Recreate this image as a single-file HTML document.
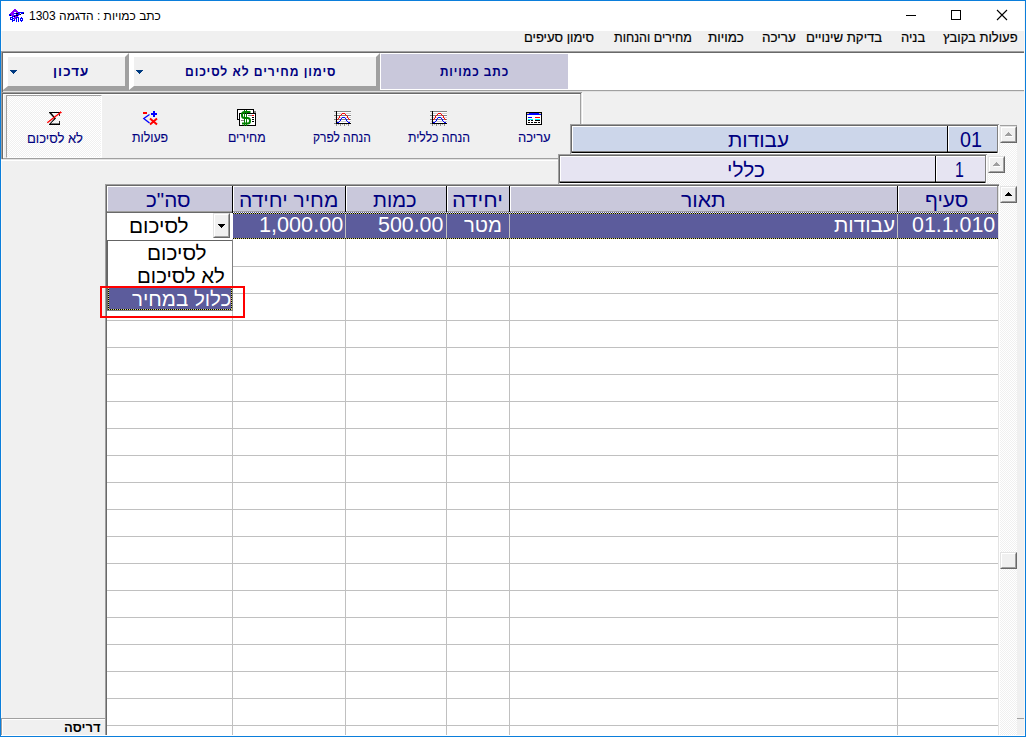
<!DOCTYPE html>
<html lang="he"><head><meta charset="utf-8"><title>כתב כמויות</title>
<style>
html,body{margin:0;padding:0}
body{width:1026px;height:737px;position:relative;overflow:hidden;background:#f0f0f0;font-family:"Liberation Sans",sans-serif;direction:ltr}
body div,body span.t,body svg{position:absolute;box-sizing:border-box}
.t{white-space:nowrap;direction:rtl;unicode-bidi:plaintext;transform-origin:0 0;line-height:1}
.dith{background-image:repeating-conic-gradient(#ffffff 0 25%,#f0f0f0 0 50%);background-size:2px 2px}
</style></head>
<body>
<div style="left:0px;top:0px;width:1026px;height:1px;background:#0b7edb;"></div>
<div style="left:0px;top:736px;width:1026px;height:1px;background:#0b7edb;"></div>
<div style="left:0px;top:0px;width:1px;height:737px;background:#0b7edb;"></div>
<div style="left:1025px;top:0px;width:1px;height:737px;background:#0b7edb;"></div>
<div style="left:1px;top:1px;width:1024px;height:30px;background:#ffffff;"></div>
<svg style="left:9px;top:9px" width="16" height="13" viewBox="9 9 16 13" shape-rendering="crispEdges"><rect x="14" y="9" width="2" height="1" fill="#8a00ff"/><rect x="13" y="10" width="4" height="1" fill="#8a00ff"/><rect x="12" y="11" width="6" height="1" fill="#8a00ff"/><rect x="11" y="12" width="3" height="1" fill="#8a00ff"/><rect x="14" y="12" width="2" height="1" fill="#ffffff"/><rect x="16" y="12" width="2" height="1" fill="#8a00ff"/><rect x="18" y="12" width="6" height="1" fill="#0000ff"/><rect x="10" y="13" width="4" height="1" fill="#8a00ff"/><rect x="14" y="13" width="2" height="1" fill="#0000ff"/><rect x="16" y="13" width="2" height="1" fill="#000000"/><rect x="18" y="13" width="1" height="1" fill="#0000ff"/><rect x="19" y="13" width="1" height="1" fill="#8a00ff"/><rect x="20" y="13" width="1" height="1" fill="#ffffff"/><rect x="21" y="13" width="2" height="1" fill="#0000ff"/><rect x="23" y="13" width="1" height="1" fill="#000000"/><rect x="9" y="14" width="2" height="1" fill="#0000ff"/><rect x="11" y="14" width="3" height="1" fill="#8a00ff"/><rect x="14" y="14" width="2" height="1" fill="#ffffff"/><rect x="16" y="14" width="4" height="1" fill="#0000ff"/><rect x="20" y="14" width="1" height="1" fill="#000000"/><rect x="9" y="15" width="1" height="1" fill="#0000ff"/><rect x="10" y="15" width="1" height="1" fill="#000000"/><rect x="11" y="15" width="3" height="1" fill="#8a00ff"/><rect x="14" y="15" width="2" height="1" fill="#0000ff"/><rect x="16" y="15" width="2" height="1" fill="#000000"/><rect x="18" y="15" width="1" height="1" fill="#8a00ff"/><rect x="12" y="16" width="2" height="1" fill="#0000ff"/><rect x="14" y="16" width="1" height="1" fill="#000000"/><rect x="15" y="16" width="3" height="1" fill="#8a00ff"/><rect x="10" y="17" width="3" height="1" fill="#0000ff"/><rect x="14" y="17" width="2" height="1" fill="#8a00ff"/><rect x="16" y="17" width="3" height="1" fill="#0000ff"/><rect x="21" y="17" width="1" height="1" fill="#0000ff"/><rect x="10" y="18" width="1" height="1" fill="#0000ff"/><rect x="11" y="18" width="1" height="1" fill="#ffffff"/><rect x="12" y="18" width="2" height="1" fill="#0000ff"/><rect x="14" y="18" width="2" height="1" fill="#8a00ff"/><rect x="16" y="18" width="1" height="1" fill="#0000ff"/><rect x="18" y="18" width="1" height="1" fill="#0000ff"/><rect x="20" y="18" width="3" height="1" fill="#0000ff"/><rect x="10" y="19" width="3" height="1" fill="#0000ff"/><rect x="13" y="19" width="1" height="1" fill="#ffffff"/><rect x="14" y="19" width="1" height="1" fill="#0000ff"/><rect x="16" y="19" width="1" height="1" fill="#0000ff"/><rect x="18" y="19" width="1" height="1" fill="#0000ff"/><rect x="20" y="19" width="1" height="1" fill="#0000ff"/><rect x="21" y="19" width="1" height="1" fill="#ffffff"/><rect x="22" y="19" width="1" height="1" fill="#0000ff"/><rect x="12" y="20" width="3" height="1" fill="#0000ff"/><rect x="16" y="20" width="1" height="1" fill="#0000ff"/><rect x="18" y="20" width="1" height="1" fill="#0000ff"/><rect x="20" y="20" width="3" height="1" fill="#0000ff"/><rect x="12" y="21" width="1" height="1" fill="#0000ff"/><rect x="16" y="21" width="1" height="1" fill="#0000ff"/><rect x="18" y="21" width="1" height="1" fill="#0000ff"/><rect x="21" y="21" width="1" height="1" fill="#0000ff"/></svg>
<span class="t" style="left:29.00px;top:10px;color:#000;font-size:12px;">כתב כמויות : הדגמה 1303</span>
<svg style="left:900px;top:5px" width="115" height="22" viewBox="0 0 115 22">
<path d="M6 10.5H16" stroke="#000" stroke-width="1" fill="none"/>
<rect x="51.5" y="5.5" width="9" height="9" stroke="#000" stroke-width="1" fill="none"/>
<path d="M97 5L107 15M107 5L97 15" stroke="#000" stroke-width="1.1" fill="none"/>
</svg>
<span class="t" style="left:943.00px;top:31px;color:#000;font-size:13px;-webkit-text-stroke:0.2px #000;">פעולות בקובץ</span>
<span class="t" style="left:901.00px;top:31px;color:#000;font-size:13px;-webkit-text-stroke:0.2px #000;">בניה</span>
<span class="t" style="left:805.99px;top:31px;color:#000;font-size:13px;-webkit-text-stroke:0.2px #000;transform:scaleX(1.0135);">בדיקת שינויים</span>
<span class="t" style="left:761.97px;top:31px;color:#000;font-size:13px;-webkit-text-stroke:0.2px #000;transform:scaleX(1.0323);">עריכה</span>
<span class="t" style="left:708.00px;top:31px;color:#000;font-size:13px;-webkit-text-stroke:0.2px #000;transform:scaleX(1.0294);">כמויות</span>
<span class="t" style="left:614.00px;top:31px;color:#000;font-size:13px;-webkit-text-stroke:0.2px #000;transform:scaleX(0.9625);">מחירים והנחות</span>
<span class="t" style="left:524.00px;top:31px;color:#000;font-size:13px;-webkit-text-stroke:0.2px #000;">סימון סעיפים</span>
<div style="left:1px;top:51px;width:1024px;height:1px;background:#a0a0a0;"></div>
<div style="left:2px;top:52px;width:1023px;height:1px;background:#696969;"></div>
<div style="left:1px;top:51px;width:1px;height:108px;background:#a0a0a0;"></div>
<div style="left:2px;top:52px;width:1px;height:107px;background:#696969;"></div>
<div style="left:3px;top:53px;width:1022px;height:37px;background:#ffffff;"></div>
<div style="left:3px;top:90px;width:1022px;height:1px;background:#a0a0a0;"></div>
<div style="left:3px;top:91px;width:1022px;height:1px;background:#e3e3e3;"></div>
<div style="left:3px;top:53px;width:126px;height:37px;background:#f0f0f0;border-style:solid;border-width:4px 4px 4px 5px;border-color:#ffffff #a0a0a0 #a0a0a0 #ffffff"></div>
<div style="left:129px;top:53px;width:251px;height:37px;background:#f0f0f0;border-style:solid;border-width:4px 4px 4px 5px;border-color:#ffffff #a0a0a0 #a0a0a0 #ffffff"></div>
<div style="left:381px;top:54px;width:187px;height:35px;background:#c9c8db;"></div>
<svg style="left:10px;top:70px" width="7" height="4" viewBox="0 0 7 4" shape-rendering="crispEdges"><path d="M0 0h7v1h-7zM1 1h5v1h-5zM2 2h3v1h-3zM3 3h1v1h-1z" fill="#003a80"/></svg>
<svg style="left:136px;top:70px" width="7" height="4" viewBox="0 0 7 4" shape-rendering="crispEdges"><path d="M0 0h7v1h-7zM1 1h5v1h-5zM2 2h3v1h-3zM3 3h1v1h-1z" fill="#003a80"/></svg>
<span class="t" style="left:52.97px;top:65px;color:#000080;font-size:13px;font-weight:bold;letter-spacing:1px;transform:scaleX(1.0303);">עדכון</span>
<span class="t" style="left:185.07px;top:65px;color:#000080;font-size:13px;font-weight:bold;letter-spacing:1px;transform:scaleX(0.9313);">סימון מחירים לא לסיכום</span>
<span class="t" style="left:440.00px;top:65px;color:#000080;font-size:13px;font-weight:bold;letter-spacing:1px;transform:scaleX(0.9067);">כתב כמויות</span>
<div style="left:1px;top:92px;width:581px;height:1px;background:#a0a0a0;"></div>
<div style="left:2px;top:93px;width:579px;height:1px;background:#696969;"></div>
<div style="left:1px;top:160px;width:582px;height:1px;background:#ffffff;"></div>
<div style="left:2px;top:159px;width:580px;height:1px;background:#e3e3e3;"></div>
<div style="left:582px;top:93px;width:1px;height:68px;background:#ffffff;"></div>
<div style="left:581px;top:93px;width:1px;height:67px;background:#e3e3e3;"></div>
<div style="left:3px;top:94px;width:578px;height:1px;background:#ffffff;"></div>
<div style="left:3px;top:94px;width:1px;height:64px;background:#ffffff;"></div>
<div style="left:3px;top:158px;width:578px;height:1px;background:#a0a0a0;"></div>
<div style="left:580px;top:94px;width:1px;height:65px;background:#a0a0a0;"></div>
<div class="dith" style="left:6px;top:95px;width:96px;height:63px;border-style:solid;border-width:1px;border-color:#a0a0a0 #ffffff #ffffff #a0a0a0"></div>
<span class="t" style="left:27.00px;top:132px;color:#000080;font-size:13px;-webkit-text-stroke:0.12px #000080;">לא לסיכום</span>
<span class="t" style="left:132.00px;top:131px;color:#000080;font-size:13px;-webkit-text-stroke:0.12px #000080;transform:scaleX(0.9474);">פעולות</span>
<span class="t" style="left:228.05px;top:131px;color:#000080;font-size:13px;-webkit-text-stroke:0.12px #000080;transform:scaleX(0.9474);">מחירים</span>
<span class="t" style="left:313.08px;top:131px;color:#000080;font-size:13px;-webkit-text-stroke:0.12px #000080;transform:scaleX(0.9180);">הנחה לפרק</span>
<span class="t" style="left:408.00px;top:131px;color:#000080;font-size:13px;-webkit-text-stroke:0.12px #000080;transform:scaleX(0.9385);">הנחה כללית</span>
<span class="t" style="left:518.00px;top:131px;color:#000080;font-size:13px;-webkit-text-stroke:0.12px #000080;">עריכה</span>
<svg style="left:45px;top:108px" width="20" height="19" viewBox="45 108 20 19"><path d="M49 112H60V116H59.2V113H51.4L56 118.4L50.8 123.6H59.2V121H60V125H49V124.2L54.3 118.5L49 112.8Z" fill="#000"/><path d="M47.3 122.8L60.8 112.3" stroke="#ff0000" stroke-width="1.35" fill="none"/><path d="M60.2 111L62.2 112.9L59.6 113.2Z" fill="#ff0000"/></svg><svg style="left:143px;top:111px" width="15" height="15" viewBox="143 111 15 15" shape-rendering="crispEdges"><rect x="143" y="112" width="4" height="2" fill="#ff0000"/><rect x="151" y="113" width="6" height="2" fill="#0000ff"/><rect x="153" y="111" width="2" height="6" fill="#0000ff"/></svg><svg style="left:141px;top:110px" width="19" height="17" viewBox="141 110 19 17"><path d="M149.5 114.5L143.8 118.5L149.5 123" stroke="#0000ff" stroke-width="1.3" fill="none"/><path d="M150 118.5L157 124.5M157 118.5L150 124.5" stroke="#ff0000" stroke-width="2" fill="none"/></svg><svg style="left:237px;top:109px" width="19" height="17" viewBox="237 109 19 17" shape-rendering="crispEdges"><rect x="237" y="109" width="17" height="11" fill="#000"/><rect x="238" y="110" width="15" height="9" fill="#fff"/><rect x="239" y="113" width="17" height="13" fill="#000"/><rect x="240" y="114" width="15" height="11" fill="#fff"/><rect x="254" y="111" width="2" height="2" fill="#808080"/><rect x="248" y="115" width="4" height="1" fill="#808080"/><rect x="252" y="115" width="2" height="1" fill="#ff0000"/><rect x="252" y="117" width="2" height="1" fill="#000"/><rect x="252" y="119" width="2" height="1" fill="#000"/><rect x="252" y="121" width="2" height="1" fill="#000"/><rect x="241" y="120" width="3" height="1" fill="#808080"/></svg><svg style="left:240px;top:109px" width="12" height="18" viewBox="240 109 12 18"><path d="M250.5 112H244.5C243 112 242 113 242 114.5V115.5C242 117 243 118 244.5 118H247.5C249 118 250 119 250 120.5V121C250 122.5 249 123.5 247.5 123.5H242" stroke="#008000" stroke-width="2" fill="none"/><path d="M244.5 110V126M246.5 110V126" stroke="#008000" stroke-width="1" fill="none"/></svg><svg style="left:334px;top:111px" width="17" height="15" viewBox="334 111 17 15" shape-rendering="crispEdges"><rect x="337" y="112" width="14" height="11" fill="#ffffff"/><rect x="334" y="111" width="17" height="1" fill="#808080"/><rect x="334" y="115" width="17" height="1" fill="#808080"/><rect x="334" y="119" width="17" height="1" fill="#808080"/><rect x="335" y="113" width="16" height="1" fill="#d0d0d0"/><rect x="335" y="117" width="16" height="1" fill="#d0d0d0"/><rect x="335" y="121" width="16" height="1" fill="#d0d0d0"/><rect x="334" y="123" width="2" height="1" fill="#808080"/><rect x="336" y="111" width="1" height="13" fill="#000000"/><rect x="336" y="123" width="15" height="1" fill="#000000"/><rect x="336" y="124" width="1" height="2" fill="#909090"/><rect x="340" y="124" width="1" height="2" fill="#909090"/><rect x="344" y="124" width="1" height="2" fill="#909090"/><rect x="348" y="124" width="1" height="2" fill="#909090"/><rect x="338" y="124" width="1" height="1" fill="#b0b0b0"/><rect x="342" y="124" width="1" height="1" fill="#b0b0b0"/><rect x="346" y="124" width="1" height="1" fill="#b0b0b0"/><rect x="337" y="119" width="1" height="1" fill="#ff0000"/><rect x="338" y="118" width="1" height="1" fill="#ff0000"/><rect x="339" y="116" width="1" height="2" fill="#ff0000"/><rect x="340" y="115" width="1" height="1" fill="#ff0000"/><rect x="341" y="114" width="1" height="1" fill="#ff0000"/><rect x="342" y="113" width="3" height="1" fill="#ff0000"/><rect x="345" y="114" width="1" height="1" fill="#ff0000"/><rect x="346" y="115" width="1" height="1" fill="#ff0000"/><rect x="347" y="116" width="1" height="2" fill="#ff0000"/><rect x="348" y="118" width="1" height="1" fill="#ff0000"/><rect x="349" y="119" width="1" height="1" fill="#ff0000"/><rect x="337" y="122" width="2" height="1" fill="#0000ff"/><rect x="339" y="121" width="1" height="1" fill="#0000ff"/><rect x="340" y="119" width="1" height="2" fill="#0000ff"/><rect x="341" y="118" width="1" height="1" fill="#0000ff"/><rect x="342" y="117" width="3" height="1" fill="#0000ff"/><rect x="345" y="118" width="1" height="1" fill="#0000ff"/><rect x="346" y="119" width="1" height="2" fill="#0000ff"/><rect x="347" y="121" width="1" height="1" fill="#0000ff"/><rect x="348" y="122" width="2" height="1" fill="#0000ff"/></svg><svg style="left:430px;top:111px" width="17" height="15" viewBox="430 111 17 15" shape-rendering="crispEdges"><rect x="433" y="112" width="14" height="11" fill="#ffffff"/><rect x="430" y="111" width="17" height="1" fill="#808080"/><rect x="430" y="115" width="17" height="1" fill="#808080"/><rect x="430" y="119" width="17" height="1" fill="#808080"/><rect x="431" y="113" width="16" height="1" fill="#d0d0d0"/><rect x="431" y="117" width="16" height="1" fill="#d0d0d0"/><rect x="431" y="121" width="16" height="1" fill="#d0d0d0"/><rect x="430" y="123" width="2" height="1" fill="#808080"/><rect x="432" y="111" width="1" height="13" fill="#000000"/><rect x="432" y="123" width="15" height="1" fill="#000000"/><rect x="432" y="124" width="1" height="2" fill="#909090"/><rect x="436" y="124" width="1" height="2" fill="#909090"/><rect x="440" y="124" width="1" height="2" fill="#909090"/><rect x="444" y="124" width="1" height="2" fill="#909090"/><rect x="434" y="124" width="1" height="1" fill="#b0b0b0"/><rect x="438" y="124" width="1" height="1" fill="#b0b0b0"/><rect x="442" y="124" width="1" height="1" fill="#b0b0b0"/><rect x="433" y="119" width="1" height="1" fill="#ff0000"/><rect x="434" y="118" width="1" height="1" fill="#ff0000"/><rect x="435" y="116" width="1" height="2" fill="#ff0000"/><rect x="436" y="115" width="1" height="1" fill="#ff0000"/><rect x="437" y="114" width="1" height="1" fill="#ff0000"/><rect x="438" y="113" width="3" height="1" fill="#ff0000"/><rect x="441" y="114" width="1" height="1" fill="#ff0000"/><rect x="442" y="115" width="1" height="1" fill="#ff0000"/><rect x="443" y="116" width="1" height="2" fill="#ff0000"/><rect x="444" y="118" width="1" height="1" fill="#ff0000"/><rect x="445" y="119" width="1" height="1" fill="#ff0000"/><rect x="433" y="122" width="2" height="1" fill="#0000ff"/><rect x="435" y="121" width="1" height="1" fill="#0000ff"/><rect x="436" y="119" width="1" height="2" fill="#0000ff"/><rect x="437" y="118" width="1" height="1" fill="#0000ff"/><rect x="438" y="117" width="3" height="1" fill="#0000ff"/><rect x="441" y="118" width="1" height="1" fill="#0000ff"/><rect x="442" y="119" width="1" height="2" fill="#0000ff"/><rect x="443" y="121" width="1" height="1" fill="#0000ff"/><rect x="444" y="122" width="2" height="1" fill="#0000ff"/></svg><svg style="left:526px;top:112px" width="16" height="13" viewBox="526 112 16 13" shape-rendering="crispEdges"><rect x="526" y="112" width="16" height="13" fill="#000"/><rect x="527" y="113" width="14" height="11" fill="#fff"/><rect x="527" y="113" width="14" height="2" fill="#0000ff"/><rect x="527" y="113" width="2" height="1" fill="#c8c090"/><rect x="539" y="113" width="2" height="1" fill="#c8c090"/><rect x="528" y="117" width="4" height="1" fill="#0000ff"/><rect x="535" y="117" width="5" height="1" fill="#ff0000"/><rect x="528" y="119" width="5" height="1" fill="#00ffff"/><rect x="535" y="119" width="5" height="1" fill="#00ffff"/><rect x="528" y="120" width="2" height="1" fill="#000"/><rect x="531" y="120" width="2" height="1" fill="#000"/><rect x="535" y="120" width="5" height="1" fill="#000"/><rect x="528" y="122" width="2" height="1" fill="#000"/><rect x="531" y="122" width="2" height="1" fill="#000"/><rect x="534" y="122" width="3" height="1" fill="#000"/><rect x="538" y="122" width="2" height="1" fill="#000"/></svg>
<div style="left:570px;top:124px;width:429px;height:1px;background:#a0a0a0;"></div>
<div style="left:571px;top:125px;width:427px;height:1px;background:#696969;"></div>
<div style="left:570px;top:124px;width:1px;height:30px;background:#a0a0a0;"></div>
<div style="left:571px;top:125px;width:1px;height:28px;background:#696969;"></div>
<div style="left:572px;top:126px;width:426px;height:26px;background:#ccd6ea;"></div>
<div style="left:572px;top:126px;width:425px;height:1px;background:#ffffff;"></div>
<div style="left:572px;top:126px;width:1px;height:25px;background:#ffffff;"></div>
<div style="left:572px;top:151px;width:426px;height:1px;background:#808080;"></div>
<div style="left:572px;top:152px;width:426px;height:1px;background:#000000;"></div>
<div style="left:572px;top:153px;width:427px;height:1px;background:#ffffff;"></div>
<div style="left:947px;top:126px;width:1px;height:27px;background:#000000;"></div>
<div style="left:948px;top:126px;width:1px;height:25px;background:#ffffff;"></div>
<div style="left:997px;top:126px;width:1px;height:27px;background:#808080;"></div>
<div style="left:998px;top:125px;width:1px;height:29px;background:#ffffff;"></div>
<div style="left:558px;top:154px;width:429px;height:1px;background:#a0a0a0;"></div>
<div style="left:559px;top:155px;width:427px;height:1px;background:#696969;"></div>
<div style="left:558px;top:154px;width:1px;height:30px;background:#a0a0a0;"></div>
<div style="left:559px;top:155px;width:1px;height:28px;background:#696969;"></div>
<div style="left:560px;top:156px;width:426px;height:26px;background:#e6e4f2;"></div>
<div style="left:560px;top:156px;width:425px;height:1px;background:#ffffff;"></div>
<div style="left:560px;top:156px;width:1px;height:25px;background:#ffffff;"></div>
<div style="left:560px;top:181px;width:426px;height:1px;background:#808080;"></div>
<div style="left:560px;top:182px;width:426px;height:1px;background:#000000;"></div>
<div style="left:560px;top:183px;width:427px;height:1px;background:#ffffff;"></div>
<div style="left:935px;top:156px;width:1px;height:27px;background:#000000;"></div>
<div style="left:936px;top:156px;width:1px;height:25px;background:#ffffff;"></div>
<div style="left:985px;top:156px;width:1px;height:27px;background:#808080;"></div>
<div style="left:986px;top:155px;width:1px;height:29px;background:#ffffff;"></div>
<span class="t" style="left:728.00px;top:131px;color:#000080;font-size:19.7px;transform:scaleX(1.0526);">עבודות</span>
<span class="t" style="left:960.13px;top:128px;color:#000080;font-size:22.7px;direction:ltr;transform:scaleX(0.8696);">01</span>
<span class="t" style="left:726.88px;top:161px;color:#000080;font-size:19.7px;transform:scaleX(1.0606);">כללי</span>
<span class="t" style="left:954.60px;top:158px;color:#000080;font-size:22.7px;direction:ltr;transform:scaleX(0.7000);">1</span>
<div class="dith" style="left:1000px;top:143px;width:17px;height:43px"></div>
<div style="left:1000px;top:125px;width:17px;height:1px;background:#a0a0a0;"></div>
<div style="left:1000px;top:126px;width:17px;height:17px;background:#f0f0f0;border:1px solid;border-color:#e3e3e3 #696969 #696969 #e3e3e3"><div style="left:0;top:0;width:15px;height:15px;border:1px solid;border-color:#ffffff #a0a0a0 #a0a0a0 #ffffff"></div></div>
<svg style="left:1006px;top:133px" width="7" height="4" viewBox="0 0 7 4" shape-rendering="crispEdges"><path d="M3 0h1v1h-1zM2 1h3v1h-3zM1 2h5v1h-5zM0 3h7v1h-7z" fill="#ffffff"/></svg>
<svg style="left:1005px;top:132px" width="7" height="4" viewBox="0 0 7 4" shape-rendering="crispEdges"><path d="M3 0h1v1h-1zM2 1h3v1h-3zM1 2h5v1h-5zM0 3h7v1h-7z" fill="#a0a0a0"/></svg>
<div class="dith" style="left:988px;top:173px;width:17px;height:11px"></div>
<div style="left:988px;top:156px;width:17px;height:17px;background:#f0f0f0;border:1px solid;border-color:#e3e3e3 #696969 #696969 #e3e3e3"><div style="left:0;top:0;width:15px;height:15px;border:1px solid;border-color:#ffffff #a0a0a0 #a0a0a0 #ffffff"></div></div>
<svg style="left:994px;top:163px" width="7" height="4" viewBox="0 0 7 4" shape-rendering="crispEdges"><path d="M3 0h1v1h-1zM2 1h3v1h-3zM1 2h5v1h-5zM0 3h7v1h-7z" fill="#ffffff"/></svg>
<svg style="left:993px;top:162px" width="7" height="4" viewBox="0 0 7 4" shape-rendering="crispEdges"><path d="M3 0h1v1h-1zM2 1h3v1h-3zM1 2h5v1h-5zM0 3h7v1h-7z" fill="#a0a0a0"/></svg>
<div style="left:107px;top:186px;width:891px;height:550px;background:#ffffff;"></div>
<div style="left:105px;top:184px;width:894px;height:1px;background:#a0a0a0;"></div>
<div style="left:106px;top:185px;width:893px;height:1px;background:#696969;"></div>
<div style="left:105px;top:184px;width:1px;height:552px;background:#a0a0a0;"></div>
<div style="left:106px;top:185px;width:1px;height:551px;background:#696969;"></div>
<div style="left:998px;top:186px;width:1px;height:550px;background:#e3e3e3;"></div>
<div style="left:999px;top:185px;width:1px;height:551px;background:#ffffff;"></div>
<div style="left:107px;top:186px;width:126px;height:25px;background:#c9c8db;"></div>
<div style="left:107px;top:186px;width:125px;height:1px;background:#ffffff;"></div>
<div style="left:107px;top:186px;width:1px;height:25px;background:#ffffff;"></div>
<div style="left:232px;top:186px;width:1px;height:27px;background:#000000;"></div>
<div style="left:233px;top:186px;width:113px;height:25px;background:#c9c8db;"></div>
<div style="left:233px;top:186px;width:112px;height:1px;background:#ffffff;"></div>
<div style="left:233px;top:186px;width:1px;height:25px;background:#ffffff;"></div>
<div style="left:345px;top:186px;width:1px;height:27px;background:#000000;"></div>
<div style="left:346px;top:186px;width:101px;height:25px;background:#c9c8db;"></div>
<div style="left:346px;top:186px;width:100px;height:1px;background:#ffffff;"></div>
<div style="left:346px;top:186px;width:1px;height:25px;background:#ffffff;"></div>
<div style="left:446px;top:186px;width:1px;height:27px;background:#000000;"></div>
<div style="left:447px;top:186px;width:63px;height:25px;background:#c9c8db;"></div>
<div style="left:447px;top:186px;width:62px;height:1px;background:#ffffff;"></div>
<div style="left:447px;top:186px;width:1px;height:25px;background:#ffffff;"></div>
<div style="left:509px;top:186px;width:1px;height:27px;background:#000000;"></div>
<div style="left:510px;top:186px;width:388px;height:25px;background:#c9c8db;"></div>
<div style="left:510px;top:186px;width:387px;height:1px;background:#ffffff;"></div>
<div style="left:510px;top:186px;width:1px;height:25px;background:#ffffff;"></div>
<div style="left:897px;top:186px;width:1px;height:27px;background:#000000;"></div>
<div style="left:898px;top:186px;width:100px;height:25px;background:#c9c8db;"></div>
<div style="left:898px;top:186px;width:99px;height:1px;background:#ffffff;"></div>
<div style="left:898px;top:186px;width:1px;height:25px;background:#ffffff;"></div>
<div style="left:997px;top:186px;width:1px;height:27px;background:#909090;"></div>
<div style="left:107px;top:211px;width:891px;height:1px;background:#a0a0a0;"></div>
<div style="left:107px;top:212px;width:891px;height:1px;background:#696969;"></div>
<div style="left:232px;top:211px;width:1px;height:2px;background:#000000;"></div>
<div style="left:345px;top:211px;width:1px;height:2px;background:#000000;"></div>
<div style="left:446px;top:211px;width:1px;height:2px;background:#000000;"></div>
<div style="left:509px;top:211px;width:1px;height:2px;background:#000000;"></div>
<div style="left:897px;top:211px;width:1px;height:2px;background:#000000;"></div>
<div style="left:232px;top:213px;width:1px;height:523px;background:#c0c0c0;"></div>
<div style="left:345px;top:213px;width:1px;height:523px;background:#c0c0c0;"></div>
<div style="left:446px;top:213px;width:1px;height:523px;background:#c0c0c0;"></div>
<div style="left:509px;top:213px;width:1px;height:523px;background:#c0c0c0;"></div>
<div style="left:897px;top:213px;width:1px;height:523px;background:#c0c0c0;"></div>
<div style="left:107px;top:266px;width:891px;height:1px;background:#c0c0c0;"></div>
<div style="left:107px;top:293px;width:891px;height:1px;background:#c0c0c0;"></div>
<div style="left:107px;top:320px;width:891px;height:1px;background:#c0c0c0;"></div>
<div style="left:107px;top:347px;width:891px;height:1px;background:#c0c0c0;"></div>
<div style="left:107px;top:374px;width:891px;height:1px;background:#c0c0c0;"></div>
<div style="left:107px;top:401px;width:891px;height:1px;background:#c0c0c0;"></div>
<div style="left:107px;top:428px;width:891px;height:1px;background:#c0c0c0;"></div>
<div style="left:107px;top:455px;width:891px;height:1px;background:#c0c0c0;"></div>
<div style="left:107px;top:482px;width:891px;height:1px;background:#c0c0c0;"></div>
<div style="left:107px;top:509px;width:891px;height:1px;background:#c0c0c0;"></div>
<div style="left:107px;top:536px;width:891px;height:1px;background:#c0c0c0;"></div>
<div style="left:107px;top:563px;width:891px;height:1px;background:#c0c0c0;"></div>
<div style="left:107px;top:590px;width:891px;height:1px;background:#c0c0c0;"></div>
<div style="left:107px;top:617px;width:891px;height:1px;background:#c0c0c0;"></div>
<div style="left:107px;top:644px;width:891px;height:1px;background:#c0c0c0;"></div>
<div style="left:107px;top:671px;width:891px;height:1px;background:#c0c0c0;"></div>
<div style="left:107px;top:698px;width:891px;height:1px;background:#c0c0c0;"></div>
<div style="left:107px;top:725px;width:891px;height:1px;background:#c0c0c0;"></div>
<div style="left:233px;top:214px;width:765px;height:24px;background:#5c5c9c;"></div>
<div style="left:345px;top:214px;width:1px;height:24px;background:#c0c0c0;"></div>
<div style="left:446px;top:214px;width:1px;height:24px;background:#c0c0c0;"></div>
<div style="left:509px;top:214px;width:1px;height:24px;background:#c0c0c0;"></div>
<div style="left:897px;top:214px;width:1px;height:24px;background:#c0c0c0;"></div>
<div style="left:233px;top:212px;width:765px;height:1px;background:repeating-linear-gradient(90deg,#ffffff 0 1px,#5050a0 1px 2px)"></div>
<div style="left:233px;top:213px;width:765px;height:1px;background:repeating-linear-gradient(90deg,#000000 0 1px,#d8d870 1px 2px)"></div>
<div style="left:233px;top:238px;width:765px;height:1px;background:repeating-linear-gradient(90deg,#000000 0 1px,#d8d870 1px 2px)"></div>
<div style="left:107px;top:213px;width:126px;height:26px;background:#ffffff;"></div>
<div style="left:213px;top:213px;width:17px;height:25px;background:#f0f0f0;border:1px solid;border-color:#e3e3e3 #696969 #696969 #e3e3e3"><div style="left:0;top:0;width:15px;height:23px;border:1px solid;border-color:#ffffff #a0a0a0 #a0a0a0 #ffffff"></div></div>
<svg style="left:218px;top:224px" width="7" height="4" viewBox="0 0 7 4" shape-rendering="crispEdges"><path d="M0 0h7v1h-7zM1 1h5v1h-5zM2 2h3v1h-3zM3 3h1v1h-1z" fill="#000000"/></svg>
<span class="t" style="left:145.95px;top:191px;color:#000080;font-size:19.7px;transform:scaleX(1.0488);">סה"כ</span>
<span class="t" style="left:238.93px;top:191px;color:#000080;font-size:19.7px;transform:scaleX(1.0659);">מחיר יחידה</span>
<span class="t" style="left:373.00px;top:191px;color:#000080;font-size:19.7px;transform:scaleX(1.0238);">כמות</span>
<span class="t" style="left:451.88px;top:191px;color:#000080;font-size:19.7px;transform:scaleX(1.1163);">יחידה</span>
<span class="t" style="left:681.00px;top:191px;color:#000080;font-size:19.7px;transform:scaleX(1.0750);">תאור</span>
<span class="t" style="left:924.95px;top:191px;color:#000080;font-size:19.7px;transform:scaleX(1.0500);">סעיף</span>
<span class="t" style="left:128.89px;top:217px;color:#000;font-size:19.7px;transform:scaleX(1.0556);">לסיכום</span>
<span class="t" style="left:259.09px;top:213px;color:#fff;font-size:22.7px;direction:ltr;transform:scaleX(0.9535);">1,000.00</span>
<span class="t" style="left:378.06px;top:213px;color:#fff;font-size:22.7px;direction:ltr;transform:scaleX(0.9412);">500.00</span>
<span class="t" style="left:464.00px;top:216px;color:#fff;font-size:19.7px;transform:scaleX(1.0286);">מטר</span>
<span class="t" style="left:834.00px;top:216px;color:#fff;font-size:19.7px;transform:scaleX(1.0526);">עבודות</span>
<span class="t" style="left:912.06px;top:213px;color:#fff;font-size:22.7px;direction:ltr;transform:scaleX(0.9425);">01.1.010</span>
<div style="left:107px;top:240px;width:126px;height:71px;background:#ffffff;"></div>
<div style="left:107px;top:240px;width:126px;height:1px;background:#646464;"></div>
<div style="left:107px;top:240px;width:1px;height:71px;background:#646464;"></div>
<div style="left:232px;top:240px;width:1px;height:71px;background:#808080;"></div>
<div style="left:107px;top:310px;width:126px;height:1px;background:#808080;"></div>
<span class="t" style="left:146.89px;top:244px;color:#000;font-size:19.7px;transform:scaleX(1.0556);">לסיכום</span>
<span class="t" style="left:136.93px;top:267px;color:#000;font-size:19.7px;transform:scaleX(1.0366);">לא לסיכום</span>
<div style="left:108px;top:287px;width:124px;height:23px;background:#5c5c9c;"></div>
<div style="left:108px;top:287px;width:124px;height:23px;background:repeating-linear-gradient(90deg,#000 0 1px,#d8d870 1px 2px) 0 0/100% 1px no-repeat,repeating-linear-gradient(90deg,#000 0 1px,#d8d870 1px 2px) 0 100%/100% 1px no-repeat,repeating-linear-gradient(0deg,#000 0 1px,#d8d870 1px 2px) 0 0/1px 100% no-repeat,repeating-linear-gradient(0deg,#000 0 1px,#d8d870 1px 2px) 100% 0/1px 100% no-repeat"></div>
<span class="t" style="left:132.00px;top:290px;color:#fff;font-size:19.7px;transform:scaleX(1.0426);">כלול במחיר</span>
<div style="left:100px;top:286px;width:145px;height:32px;border:2px solid #ff0000"></div>
<div class="dith" style="left:1000px;top:186px;width:17px;height:550px"></div>
<div style="left:1000px;top:186px;width:17px;height:17px;background:#f0f0f0;border:1px solid;border-color:#e3e3e3 #696969 #696969 #e3e3e3"><div style="left:0;top:0;width:15px;height:15px;border:1px solid;border-color:#ffffff #a0a0a0 #a0a0a0 #ffffff"></div></div>
<svg style="left:1005px;top:192px" width="7" height="4" viewBox="0 0 7 4" shape-rendering="crispEdges"><path d="M3 0h1v1h-1zM2 1h3v1h-3zM1 2h5v1h-5zM0 3h7v1h-7z" fill="#000000"/></svg>
<div style="left:1000px;top:552px;width:17px;height:17px;background:#f0f0f0;border:1px solid;border-color:#e3e3e3 #696969 #696969 #e3e3e3"><div style="left:0;top:0;width:15px;height:15px;border:1px solid;border-color:#ffffff #a0a0a0 #a0a0a0 #ffffff"></div></div>
<div style="left:1017px;top:718px;width:7px;height:1px;background:#a0a0a0;"></div>
<div style="left:1024px;top:1px;width:1px;height:735px;background:#f8f8f8;"></div>
<div style="left:1px;top:31px;width:1px;height:20px;background:#fbf8f4;"></div>
<div style="left:1px;top:161px;width:1px;height:557px;background:#fbf8f4;"></div>
<div style="left:1px;top:718px;width:1px;height:17px;background:#a0a0a0;"></div>
<div style="left:1px;top:718px;width:104px;height:1px;background:#a0a0a0;"></div>
<div style="left:2px;top:719px;width:103px;height:1px;background:#ffffff;"></div>
<div style="left:2px;top:719px;width:1px;height:17px;background:#ffffff;"></div>
<span class="t" style="left:64.00px;top:721px;color:#000;font-size:13px;font-weight:bold;">דריסה</span>
<div style="left:1px;top:735px;width:1024px;height:1px;background:#ffffff;"></div>
</body></html>
